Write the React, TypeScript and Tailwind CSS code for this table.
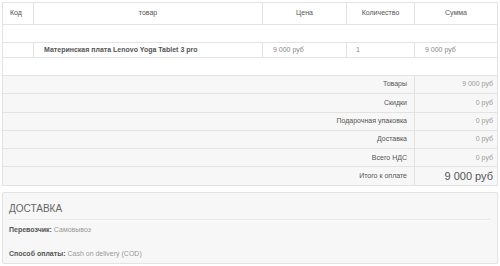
export default function App() {
  const summary: [string, string, boolean?][] = [
    ["Товары", "9 000 руб"],
    ["Скидки", "0 руб"],
    ["Подарочная упаковка", "0 руб"],
    ["Доставка", "0 руб"],
    ["Всего НДС", "0 руб"],
    ["Итого к оплате", "9 000 руб", true],
  ];
  return (
    <div className="w-[500px] h-[266px] bg-white text-[#555] overflow-hidden" style={{ fontFamily: '"Liberation Sans", Arial, sans-serif' }}>
      <div className="pt-[2px] px-[2px]">
        <div className="border-t border-l border-[#e3e3e3] text-[7px]">
          <div className="flex h-[22px] border-b border-[#e3e3e3] text-[#555]">
            <div className="w-[31px] border-r border-[#e3e3e3] flex items-center pl-[7px]">Код</div>
            <div className="w-[229px] border-r border-[#e3e3e3] flex items-center justify-center">товар</div>
            <div className="w-[84px] border-r border-[#e3e3e3] flex items-center justify-center">Цена</div>
            <div className="w-[68px] border-r border-[#e3e3e3] flex items-center justify-center">Количество</div>
            <div className="flex-1 border-r border-[#e3e3e3] flex items-center justify-center">Сумма</div>
          </div>
          <div className="h-[18px] border-b border-r border-[#e3e3e3]"></div>
          <div className="flex h-[15px] border-b border-[#e3e3e3]">
            <div className="w-[31px] border-r border-[#e3e3e3]"></div>
            <div className="w-[229px] border-r border-[#e3e3e3] flex items-center pl-[10px] font-bold text-[#555]">Материнская плата Lenovo Yoga Tablet 3 pro</div>
            <div className="w-[84px] border-r border-[#e3e3e3] flex items-center pl-[10px] text-[#888]">9 000 руб</div>
            <div className="w-[68px] border-r border-[#e3e3e3] flex items-center pl-[9px] text-[#888]">1</div>
            <div className="flex-1 border-r border-[#e3e3e3] flex items-center pl-[10px] text-[#888]">9 000 руб</div>
          </div>
          <div className="h-[18px] border-b border-r border-[#e3e3e3]"></div>
          {summary.map(([label, value, big]) => (
            <div key={label} className="flex h-[18.3px] border-b border-[#e3e3e3] bg-[#f7f7f7]">
              <div className="w-[412px] border-r border-[#e3e3e3] flex items-center justify-end pr-[7px] text-[#555]">{label}</div>
              <div className={`flex-1 border-r border-[#e3e3e3] flex items-center justify-end pr-[4px] ${big ? "text-[11px] text-[#555]" : "text-[#999]"}`}>{value}</div>
            </div>
          ))}
        </div>
        <div className="mt-[6px] h-[72px] border border-[#e3e3e3] rounded-[2px] bg-[#f7f7f7] px-[6px]">
          <div className="pt-[8px] pb-[3px] text-[10px] text-[#666] border-b border-[#e6e6e6] mr-[1px]" style={{ boxShadow: "0 1px 0 #fff" }}>ДОСТАВКА</div>
          <div className="mt-[5px] text-[7px] text-[#555]"><span className="font-bold">Перевозчик:</span> <span className="text-[#999]">Самовывоз</span></div>
          <div className="mt-[14px] text-[7px] text-[#555]"><span className="font-bold">Способ оплаты:</span> <span className="text-[#999]">Cash on delivery (COD)</span></div>
        </div>
      </div>
    </div>
  );
}
